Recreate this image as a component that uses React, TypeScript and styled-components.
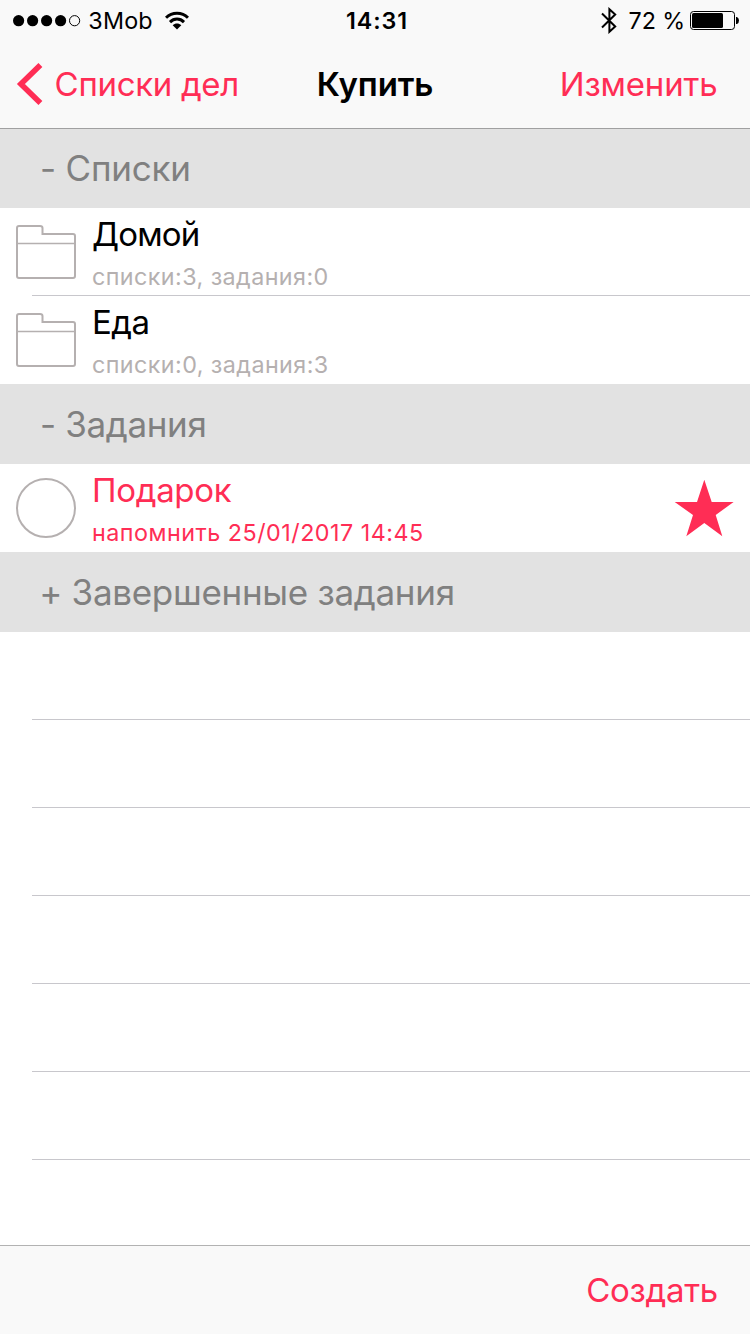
import React from 'react';
import styled, { createGlobalStyle } from 'styled-components';

const ACCENT = '#ff2d55';
const OUTLINE = '#b5b0b0';

const GlobalStyle = createGlobalStyle`
  body { margin: 0; background: #fff; }
  * { box-sizing: border-box; }
  svg { display: block; flex: none; }
`;

const Screen = styled.div`
  width: 750px;
  height: 1334px;
  display: flex;
  flex-direction: column;
  overflow: hidden;
  background: #fff;
  font-family: Inter, 'Liberation Sans', sans-serif;
  color: #000;
`;

const Header = styled.header`
  flex: none;
  height: 129px;
  background: #f9f9f9;
  border-bottom: 1px solid #a0a0a1;
`;

const StatusBar = styled.div`
  height: 40px;
  padding: 1px 11px 0 13px;
  display: grid;
  grid-template-columns: 1fr auto 1fr;
  align-items: center;
  font-size: 23.3px;
  line-height: 39px;
`;

const StatusGroup = styled.div<{ $end?: boolean }>`
  display: flex;
  align-items: center;
  justify-content: ${p => (p.$end ? 'flex-end' : 'flex-start')};
`;

const Label = styled.span<{ $spacing?: number; $gap?: number }>`
  white-space: pre;
  letter-spacing: ${p => p.$spacing ?? 0}px;
  margin-left: ${p => p.$gap ?? 0}px;
`;

const Clock = styled.span`
  padding-left: 2px;
  font-weight: 600;
  letter-spacing: 0.9px;
`;

const NavBar = styled.nav`
  height: 88px;
  padding: 0 16px;
  display: grid;
  grid-template-columns: 1fr auto 1fr;
  align-items: center;
`;

const TextButton = styled.button<{ $end?: boolean }>`
  display: flex;
  align-items: center;
  justify-self: ${p => (p.$end ? 'end' : 'start')};
  margin-right: ${p => (p.$end ? 16.5 : 0)}px;
  padding: 0;
  border: 0;
  background: none;
  font: 400 33px/40px Inter, 'Liberation Sans', sans-serif;
  color: ${ACCENT};
`;

const Title = styled.h1`
  margin: 0;
  font-size: 33px;
  line-height: 40px;
  font-weight: 600;
  letter-spacing: -0.15px;
`;

const List = styled.main`
  flex: 1;
  min-height: 0;
  display: flex;
  flex-direction: column;
`;

const SectionHeader = styled.h2<{ $first?: boolean }>`
  flex: none;
  margin: 0;
  height: ${p => (p.$first ? 79 : 80)}px;
  padding: 0 40px ${p => (p.$first ? 1 : 0)}px;
  display: flex;
  align-items: center;
  background: #e2e2e2;
  color: #808080;
  font-size: 35px;
  line-height: 42px;
  font-weight: 400;
  font-feature-settings: 'calt' 0;
`;

const Row = styled.div`
  flex: none;
  height: 88px;
  padding: 0 16px;
  display: flex;
  align-items: center;
  gap: 16px;
`;

const Separator = styled.hr`
  flex: none;
  width: 718px;
  height: 1px;
  margin: -1px 0 0 32px;
  border: 0;
  background: #c8c7cc;
`;

const RowText = styled.div<{ $accent?: boolean }>`
  flex: 1;
  height: 88px;
  padding-top: 6px;
  display: flex;
  flex-direction: column;
  color: ${p => (p.$accent ? ACCENT : '#000')};
`;

const RowTitle = styled.div`
  font-size: 33px;
  line-height: 40px;
`;

const RowDetail = styled.div<{ $muted?: boolean }>`
  font-size: 23.3px;
  line-height: 28px;
  padding-top: 9px;
  color: ${p => (p.$muted ? OUTLINE : 'inherit')};
`;

const Check = styled.div`
  flex: none;
  width: 60px;
  height: 60px;
  border: 2px solid ${OUTLINE};
  border-radius: 50%;
`;

const Toolbar = styled.footer`
  flex: none;
  height: 89px;
  padding: 0 32px;
  display: flex;
  align-items: center;
  justify-content: flex-end;
  background: #f9f9f9;
  border-top: 1px solid #b2b2b2;
`;

const SignalDots = () => (
  <svg width="68" height="12" viewBox="0 0 68 12">
    {[0, 1, 2, 3].map(i => <circle key={i} cx={5.6 + i * 14} cy="5.7" r="5.6" />)}
    <circle cx="61.6" cy="5.7" r="5.1" fill="none" stroke="#000" />
  </svg>
);

const Wifi = () => (
  <svg width="24" height="20" viewBox="0 0 24 20" fill="none" stroke="#000" strokeWidth="3">
    <path d="M1 6.8C7 .6 17 .6 23 6.8" />
    <path d="M5 11.1c4-4 10-4 14 0" />
    <path d="M12 18.5l-4.3-4.3c2.4-2.3 6.2-2.3 8.600 0z" fill="#000" stroke="none" />
  </svg>
);

const Bluetooth = () => (
  <svg width="16" height="27" viewBox="0 0 16 27" fill="none" stroke="#000" strokeWidth="2">
    <path d="M1 6.5L14.2 19.5 8.4 24.8V2.2L14.2 7.5 1 20.5" />
  </svg>
);

const Battery = () => (
  <svg width="49" height="20" viewBox="0 0 49 20">
    <rect x=".5" y=".5" width="44" height="18" rx="3" fill="none" stroke="#000" />
    <rect x="2" y="2" width="31" height="15" rx="1.5" />
    <path d="M46 6h1q2 1 2 3.5t-2 3.5h-1z" />
  </svg>
);

const Chevron = () => (
  <svg width="28" height="44" viewBox="0 0 28 44" fill="none" stroke={ACCENT} strokeWidth="5.6">
    <path d="M24.4 3L4.9 22l19.5 19" />
  </svg>
);

const Folder = () => (
  <svg width="60" height="54" viewBox="0 0 60 54" fill="none" stroke={OUTLINE} strokeWidth="2">
    <path d="M1 51V3q0-2 2-2h21q2.5 0 2.5 2v6H57q2 0 2 2v40q0 2-2 2H3q-2 0-2-2z" />
    <path d="M1 18.5h58" strokeWidth="1.5" />
  </svg>
);

const Star = () => (
  <svg width="60" height="60" viewBox="0 -1 60 60" fill={ACCENT}>
    <path d="M30.3.7L37.7 23h21.9L41.7 36l6.6 21.3L30.3 44l-18 13.3L19 36 .7 23H23z" />
  </svg>
);

const folders = [
  { name: 'Домой', detail: 'списки:3, задания:0', spacing: -0.8 },
  { name: 'Еда', detail: 'списки:0, задания:3', spacing: -0.5 },
];

export default function App() {
  return (
    <Screen>
      <GlobalStyle />
      <Header>
        <StatusBar>
          <StatusGroup>
            <SignalDots />
            <Label $gap={7.3} $spacing={0.2}>3Mob</Label>
            <Label $gap={12}><Wifi /></Label>
          </StatusGroup>
          <Clock>14:31</Clock>
          <StatusGroup $end>
            <Bluetooth />
            <Label $gap={11.5} $spacing={-0.1}>72 %</Label>
            <Label $gap={5}><Battery /></Label>
          </StatusGroup>
        </StatusBar>
        <NavBar>
          <TextButton><Chevron /><Label $gap={10.6} $spacing={-0.32}>Списки дел</Label></TextButton>
          <Title>Купить</Title>
          <TextButton $end><Label $spacing={-0.17}>Изменить</Label></TextButton>
        </NavBar>
      </Header>
      <List>
        <SectionHeader $first><Label $spacing={-0.2}>- Списки</Label></SectionHeader>
        {folders.map((f, i) => (
          <React.Fragment key={f.name}>
            <Row>
              <Folder />
              <RowText>
                <RowTitle><Label $spacing={f.spacing}>{f.name}</Label></RowTitle>
                <RowDetail $muted><Label $spacing={0.43}>{f.detail}</Label></RowDetail>
              </RowText>
            </Row>
            {i < folders.length - 1 && <Separator />}
          </React.Fragment>
        ))}
        <SectionHeader><Label $spacing={-0.35}>- Задания</Label></SectionHeader>
        <Row>
          <Check />
          <RowText $accent>
            <RowTitle><Label $spacing={-0.3}>Подарок</Label></RowTitle>
            <RowDetail><Label $spacing={0.5}>напомнить 25/01/2017 14:45</Label></RowDetail>
          </RowText>
          <Star />
        </Row>
        <SectionHeader><Label $gap={-0.8} $spacing={-0.3}>+ Завершенные задания</Label></SectionHeader>
        {Array.from({ length: 6 }, (_, i) => (
          <React.Fragment key={i}>
            <Row />
            <Separator />
          </React.Fragment>
        ))}
      </List>
      <Toolbar>
        <TextButton><Label $spacing={-0.3}>Создать</Label></TextButton>
      </Toolbar>
    </Screen>
  );
}
